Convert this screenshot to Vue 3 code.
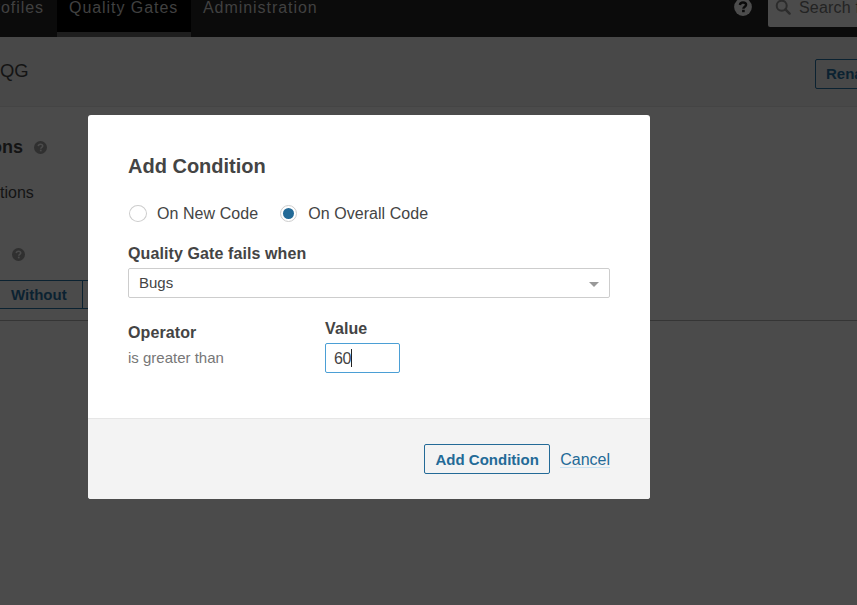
<script setup>
import { ref } from 'vue'

const scope = ref('overall')
const scopes = [
  { id: 'new', label: 'On New Code' },
  { id: 'overall', label: 'On Overall Code' },
]
const value = ref('60')
</script>

<template>
  <div class="page">
    <header class="navbar">
      <nav class="tabs">
        <a class="tab first">Profiles</a>
        <a class="tab active">Quality Gates</a>
        <a class="tab">Administration</a>
      </nav>
      <svg class="nav-help" viewBox="0 0 18 18" width="18" height="18">
        <circle cx="9" cy="9" r="8.9" fill="#4c4c4c" />
        <path d="M5.9 7C6.1 5.2 7.3 4.5 9 4.5c1.8 0 3.1.9 3.1 2.3 0 1.9-2.7 1.9-2.7 3.9" fill="none" stroke="#0b0b0b" stroke-width="2.4" />
        <rect x="8.1" y="11.8" width="2.6" height="2.4" fill="#0b0b0b" />
      </svg>
      <div class="search">
        <svg viewBox="0 0 16 16" width="16" height="16">
          <circle cx="6.7" cy="6.7" r="5" fill="none" stroke="#2c2c2c" stroke-width="2" />
          <path d="M10.4 10.4L14.6 14.6" stroke="#2c2c2c" stroke-width="2.4" stroke-linecap="round" />
        </svg>
        <span>Search for</span>
      </div>
    </header>

    <section class="gate-header">
      <h1>QG</h1>
      <button class="rename">Rename</button>
    </section>

    <main class="content">
      <div class="row conditions">
        <h2>ons</h2>
        <svg class="help" viewBox="0 0 14 14" width="13" height="13">
          <circle cx="7" cy="7" r="7" fill="#303030" />
          <path d="M4.6 5.5C4.7 4.1 5.7 3.5 7 3.5c1.4 0 2.4.8 2.4 2 0 1.4-2.1 1.4-2.1 2.9" fill="none" stroke="#4b4b4b" stroke-width="1.7" />
          <rect x="6.3" y="9.3" width="1.9" height="1.8" fill="#4b4b4b" />
        </svg>
      </div>
      <p class="row note">tions</p>
      <div class="row projects">
        <svg class="help" viewBox="0 0 14 14" width="13" height="13">
          <circle cx="7" cy="7" r="7" fill="#303030" />
          <path d="M4.6 5.5C4.7 4.1 5.7 3.5 7 3.5c1.4 0 2.4.8 2.4 2 0 1.4-2.1 1.4-2.1 2.9" fill="none" stroke="#4b4b4b" stroke-width="1.7" />
          <rect x="6.3" y="9.3" width="1.9" height="1.8" fill="#4b4b4b" />
        </svg>
      </div>
      <div class="toggle">
        <span class="option">Without</span>
        <span class="option rest"></span>
      </div>
      <div class="rule"></div>
    </main>

    <div class="modal">
      <div class="modal-body">
        <h2 class="title">Add Condition</h2>
        <div class="radios">
          <a v-for="s in scopes" :key="s.id" class="radio" @click="scope = s.id">
            <i class="dot" :class="{ checked: scope === s.id }"></i>
            <span>{{ s.label }}</span>
          </a>
        </div>
        <label class="label fails">Quality Gate fails when</label>
        <div class="select">
          <span>Bugs</span>
          <i class="arrow"></i>
        </div>
        <div class="fields">
          <div class="operator">
            <label class="label">Operator</label>
            <span class="muted">is greater than</span>
          </div>
          <div class="value">
            <label class="label">Value</label>
            <div class="input"><span>{{ value }}</span><i class="caret"></i></div>
          </div>
        </div>
      </div>
      <footer class="modal-foot">
        <button class="submit">Add Condition</button>
        <a class="cancel">Cancel</a>
      </footer>
    </div>
  </div>
</template>

<style>
body {
  margin: 0;
  overflow: hidden;
}
</style>

<style scoped>
* {
  box-sizing: border-box;
}
.page {
  position: relative;
  width: 857px;
  height: 605px;
  overflow: hidden;
  background: #4b4b4b;
  font-family: "Liberation Sans", Arial, sans-serif;
  font-size: 16px;
  color: #141414;
}
h1, h2, p {
  margin: 0;
}
button {
  font-family: inherit;
  font-size: 15px;
  font-weight: bold;
  line-height: 18px;
  background: transparent;
  border-radius: 2px;
  white-space: nowrap;
  flex: none;
}
.navbar {
  display: flex;
  height: 37px;
  background: #0b0b0b;
}
.tabs {
  display: flex;
  flex: 1;
}
.tab {
  height: 37px;
  padding: 0 12px;
  line-height: 16px;
  letter-spacing: 0.95px;
  color: #414141;
}
.tab.first {
  width: 57px;
  padding-right: 13px;
  display: flex;
  justify-content: flex-end;
}
.tab.active {
  width: 134px;
  background: #000;
  border-bottom: 5px solid #1e1e1e;
}
.nav-help {
  margin: -2px 16px 0 0;
}
.search {
  display: flex;
  gap: 8px;
  width: 89px;
  height: 27px;
  padding-left: 7px;
  background: #4b4b4b;
  border-radius: 0 0 0 2px;
  color: #232323;
  line-height: 16px;
  letter-spacing: 0.2px;
  white-space: nowrap;
  overflow: hidden;
}
.search svg {
  flex: none;
  margin-top: -1px;
}
.gate-header {
  display: flex;
  justify-content: space-between;
  height: 70px;
  border-bottom: 1px solid #444;
  background: #484848;
  overflow: hidden;
}
.gate-header h1 {
  padding-top: 22px;
  font-size: 18.4px;
  font-weight: normal;
  line-height: 24px;
}
.rename {
  width: 80px;
  height: 30px;
  margin: 22px -38px 0 0;
  padding: 0 10px;
  text-align: left;
  border: 1px solid #0b2231;
  color: #0b2231;
}
.row {
  display: flex;
  align-items: center;
}
.conditions {
  height: 20px;
  margin-top: 30px;
  gap: 11px;
}
.conditions h2 {
  display: flex;
  justify-content: flex-end;
  width: 23px;
  font-size: 18px;
}
.note {
  height: 20px;
  margin-top: 26px;
  line-height: 20px;
}
.projects {
  height: 20px;
  margin-top: 41px;
  padding-left: 12px;
}
.toggle {
  display: flex;
  height: 29px;
  margin-top: 16px;
}
.option {
  width: 83px;
  padding-left: 11px;
  border: solid #0b2231;
  border-width: 1px 1px 1px 0;
  color: #0b2231;
  font-size: 15px;
  font-weight: bold;
  line-height: 28px;
}
.rest {
  width: 60px;
}
.rule {
  height: 1px;
  margin-top: 11px;
  background: #353535;
}
.modal {
  position: absolute;
  left: 88px;
  top: 115px;
  width: 562px;
  height: 384px;
  background: #fff;
  border-radius: 3px;
  overflow: hidden;
  color: #444;
}
.modal-body {
  height: 303px;
  padding: 39px 40px 0;
}
.title {
  font-size: 20px;
  line-height: 24px;
}
.radios {
  display: flex;
  gap: 21px;
  height: 20px;
  margin-top: 26px;
}
.radio {
  display: flex;
  align-items: center;
  gap: 10px;
  line-height: 20px;
}
.radio span {
  letter-spacing: 0.06px;
}
.dot {
  display: flex;
  align-items: center;
  justify-content: center;
  width: 18px;
  height: 17px;
  margin: 0 0 1px 1px;
  border: 1px solid #cdcdcd;
  border-radius: 50%;
}
.radio:first-child .dot {
  margin-right: 1px;
  margin-left: 1px;
}
.radio:first-child {
  gap: 9px;
}
.dot.checked {
  width: 17px;
  margin-right: 1px;
}
.dot.checked::after {
  content: "";
  width: 11px;
  height: 11px;
  border-radius: 50%;
  background: #236a97;
}
.label {
  display: block;
  font-weight: bold;
  line-height: 20px;
  letter-spacing: 0.1px;
}
.fails {
  margin-top: 20px;
}
.select {
  display: flex;
  align-items: center;
  justify-content: space-between;
  height: 30px;
  margin-top: 4px;
  padding: 0 10px 2px;
  border: 1px solid #cdcdcd;
  border-radius: 2px;
  font-size: 15px;
}
.arrow {
  margin-top: 4px;
  border: 5px solid transparent;
  border-top-color: #999;
  border-bottom: 0;
}
.fields {
  display: flex;
  margin-top: 21px;
}
.operator {
  width: 197px;
  padding-top: 4px;
}
.muted {
  display: block;
  margin-top: 5px;
  font-size: 15px;
  line-height: 20px;
  color: #777;
}
.input {
  display: flex;
  align-items: center;
  width: 75px;
  height: 30px;
  margin-top: 4px;
  padding-left: 8px;
  border: 1px solid #4b9fd5;
  border-radius: 2px;
}
.input span {
  padding-top: 1px;
  letter-spacing: -0.3px;
}
.caret {
  width: 1px;
  height: 18px;
  background: #222;
}
.modal-foot {
  display: flex;
  align-items: center;
  justify-content: flex-end;
  gap: 10px;
  height: 81px;
  padding-right: 40px;
  border-top: 1px solid #e6e6e6;
  background: #f3f3f3;
}
.submit {
  width: 126px;
  height: 30px;
  padding: 1px 0 0;
  border: 1px solid #236a97;
  color: #236a97;
}
.cancel {
  padding-top: 3px;
  color: #236a97;
  line-height: 14px;
  border-bottom: 1px solid #cae3f2;
}
</style>
